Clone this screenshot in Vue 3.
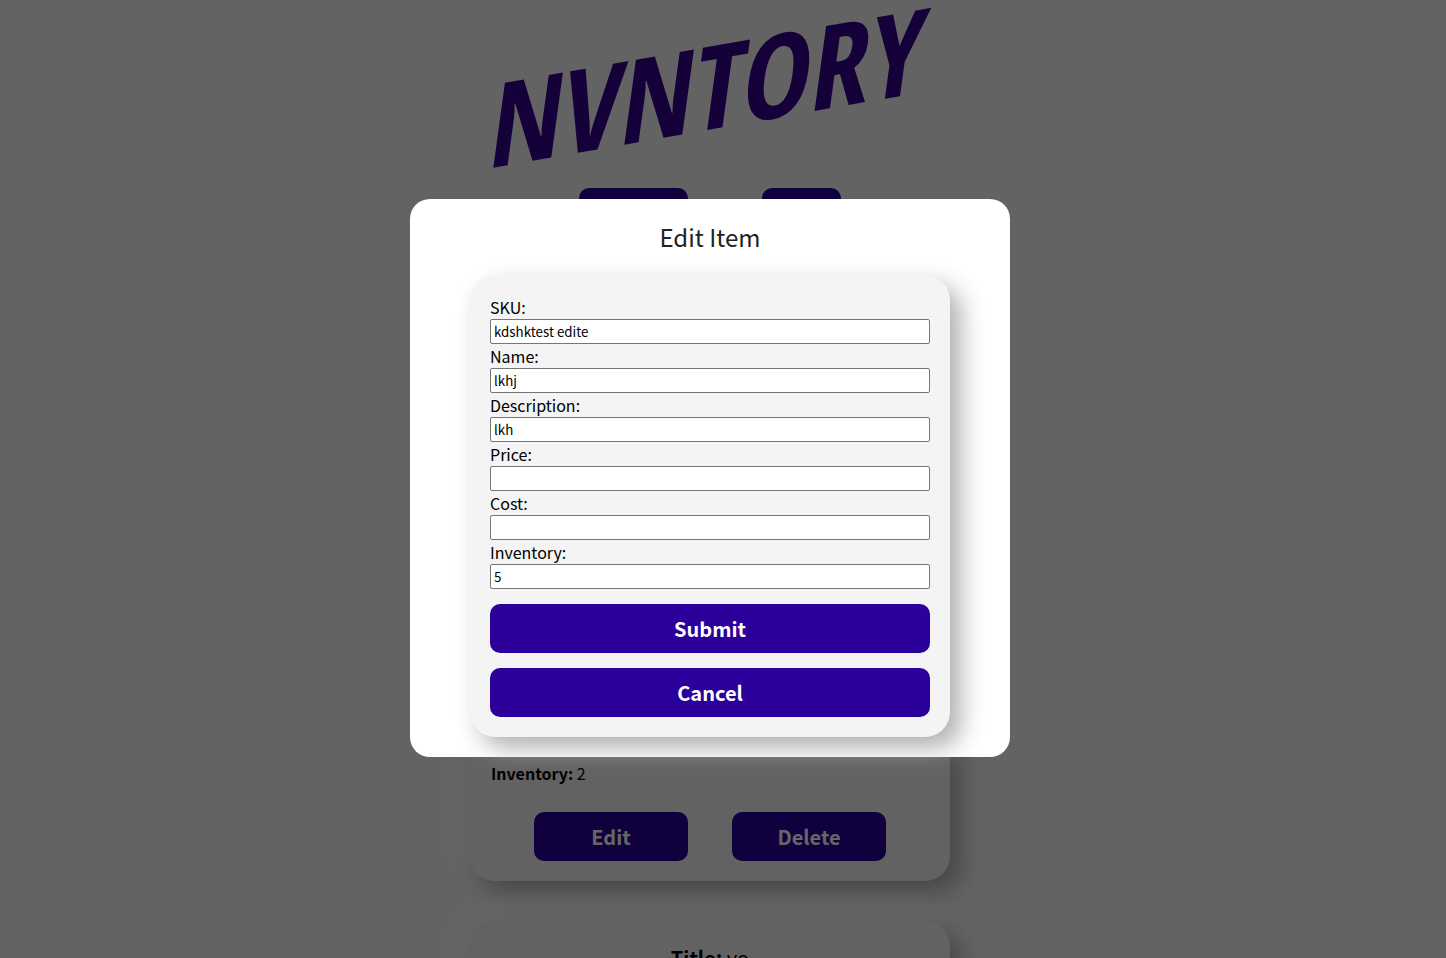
<script setup>
import { reactive } from 'vue'

const fields = reactive([
  { id: 'sku', label: 'SKU:', value: 'kdshktest edite' },
  { id: 'name', label: 'Name:', value: 'lkhj' },
  { id: 'description', label: 'Description:', value: 'lkh' },
  { id: 'price', label: 'Price:', value: '' },
  { id: 'cost', label: 'Cost:', value: '' },
  { id: 'inventory', label: 'Inventory:', value: '5' },
])
</script>

<template>
  <div class="app">
    <div class="page" inert>
      <header class="header">
        <svg class="logo" viewBox="0 0 480 188" role="img" aria-label="NVNTORY">
          <text class="logo-text" transform="translate(16 169) skewY(-10) skewX(-8)">NVNTORY</text>
        </svg>
        <nav class="nav">
          <button type="button" class="btn nav-wide"></button>
          <button type="button" class="btn nav-narrow"></button>
        </nav>
      </header>
      <main class="items">
        <article class="card item">
          <p class="detail"><strong>Inventory:</strong> 2</p>
          <div class="actions">
            <button type="button" class="btn">Edit</button>
            <button type="button" class="btn">Delete</button>
          </div>
        </article>
        <article class="card">
          <h2 class="item-title"><strong>Title:</strong> yo</h2>
        </article>
      </main>
    </div>

    <div class="overlay">
      <section class="modal" role="dialog" aria-modal="true" aria-labelledby="modal-title">
        <h1 id="modal-title" class="modal-title">Edit Item</h1>
        <form class="card form" @submit.prevent>
          <template v-for="field in fields" :key="field.id">
            <label class="label" :for="field.id">{{ field.label }}</label>
            <input :id="field.id" v-model="field.value" class="input" type="text" />
          </template>
          <button type="submit" class="btn form-btn">Submit</button>
          <button type="button" class="btn form-btn">Cancel</button>
        </form>
      </section>
    </div>
  </div>
</template>

<style>
body {
  background: #f8f8f8;
}
</style>

<style scoped>
.app {
  position: relative;
  height: 100vh;
  overflow: hidden;
  font-family: "Noto Sans CJK JP", "Noto Sans", sans-serif;
  font-size: 16px;
  line-height: 24px;
  color: #000;
}
.app * {
  box-sizing: border-box;
}
.page {
  display: flex;
  flex-direction: column;
  align-items: center;
  padding-right: 26px;
}
.header {
  width: 100%;
  max-width: 480px;
}
.logo {
  display: block;
  width: 100%;
  overflow: visible;
}
.logo-text {
  font-family: "Open Sans Condensed", "Roboto Condensed", "Liberation Sans Narrow", sans-serif;
  font-size: 116px;
  font-weight: 600;
  fill: #370091;
}
.nav {
  display: flex;
  justify-content: space-evenly;
  padding: 0 36px;
}
.btn {
  height: 49px;
  padding: 0 16px;
  border: 0;
  border-radius: 10px;
  background: #2c009b;
  color: #fff;
  font-family: inherit;
  font-size: 20px;
  font-weight: 700;
  line-height: 32px;
}
.nav-wide {
  width: 109px;
}
.nav-narrow {
  width: 79px;
}
.items {
  display: flex;
  flex-direction: column;
  gap: 40px;
  width: 100%;
  max-width: 480px;
  margin-top: 40px;
}
.card {
  padding: 20px;
  border-radius: 25px;
  background: #f4f4f4;
  box-shadow: 11px 11px 24px #b0b0b0, -11px -11px 24px #fff;
}
.item {
  display: flex;
  flex-direction: column;
  justify-content: flex-end;
  min-height: 604px;
}
.detail {
  margin: 0 0 27px;
  padding: 0 1px;
}
.actions {
  display: flex;
  justify-content: space-evenly;
}
.actions .btn {
  width: 35%;
}
.item-title {
  margin: 0;
  font-size: 20px;
  font-weight: 400;
  line-height: 34px;
  text-align: center;
}
.overlay {
  position: fixed;
  inset: 0;
  display: flex;
  align-items: center;
  justify-content: center;
  padding: 0 26px 2px 0;
  background: rgba(0, 0, 0, 0.6);
}
.modal {
  width: 100%;
  max-width: 600px;
  padding: 20px 60px;
  border-radius: 20px;
  background: #fff;
}
.modal-title {
  margin: 0 0 20px;
  color: #222;
  font-size: 24px;
  font-weight: 400;
  line-height: 36px;
  text-align: center;
}
.form {
  display: flex;
  flex-direction: column;
}
.form-btn {
  margin-top: 15px;
}
.input {
  width: 100%;
  height: 25px;
  padding: 1px 3px 2px;
  border: 1px solid #767676;
  border-radius: 2px;
  background: #fff;
  color: #000;
  font-family: inherit;
}
</style>
